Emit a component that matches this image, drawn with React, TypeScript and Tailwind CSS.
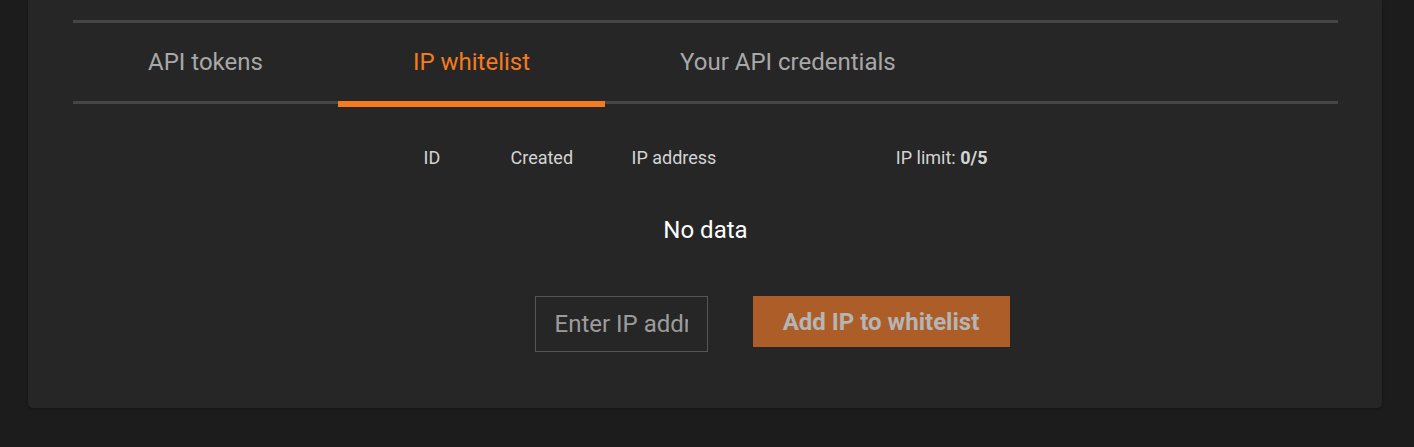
import { useState } from "react";

const TABS = ["API tokens", "IP whitelist", "Your API credentials"];

export default function App() {
  const [active, setActive] = useState(1);
  const [ip, setIp] = useState("");

  return (
    <div className="min-h-[447px] bg-[#1c1c1c] pl-[28px] pr-[32px] pb-[39px] font-['Roboto',sans-serif]">
      <div className="rounded-b-[5px] bg-[#262626] pl-[45px] pr-[44px] pt-[20px] pb-[56px] shadow-[0_1px_3px_rgba(0,0,0,0.3)]">
        {/* Tabs */}
        <div className="border-t-[3px] border-b-[3px] border-[#454545]">
          <div className="flex">
            {TABS.map((t, i) => (
              <button
                key={t}
                onClick={() => setActive(i)}
                className={`relative h-[78px] px-[75px] text-[24px] ${
                  i === active ? "text-[#f47b20]" : "text-[#a8a8a8]"
                }`}
              >
                {t}
                {i === active && (
                  <span className="absolute left-0 right-0 bottom-[-6px] h-[6px] bg-[#f47b20]" />
                )}
              </button>
            ))}
          </div>
        </div>

        {/* Table */}
        <div className="mx-auto mt-[41px] w-[564px] text-[18px] text-[#d4d4d4]">
          <div className="flex h-[24px] items-center whitespace-nowrap">
            <div className="w-[87px]">ID</div>
            <div className="w-[121px]">Created</div>
            <div className="w-[263px]">IP address</div>
            <div className="flex-1 text-right">
              IP limit: <span className="font-bold">0/5</span>
            </div>
          </div>
          <div className="mt-[45px] h-[32px] leading-[32px] text-center text-[24px] text-white">No data</div>
        </div>

        {/* Form */}
        <div className="mt-[50px] flex items-start justify-center pl-[133px]">
          <input
            value={ip}
            onChange={(e) => setIp(e.target.value)}
            placeholder="Enter IP address"
            className="h-[56px] w-[173px] border border-[#555] bg-transparent px-[19px] text-[24px] text-[#d4d4d4] outline-none placeholder:text-[#9c9c9c]"
          />
          <button
            disabled={!ip.trim()}
            className="ml-[45px] h-[51px] w-[257px] bg-[#ad5e28] text-[24px] font-bold text-[#b5b5b5]"
          >
            Add IP to whitelist
          </button>
        </div>
      </div>
    </div>
  );
}
